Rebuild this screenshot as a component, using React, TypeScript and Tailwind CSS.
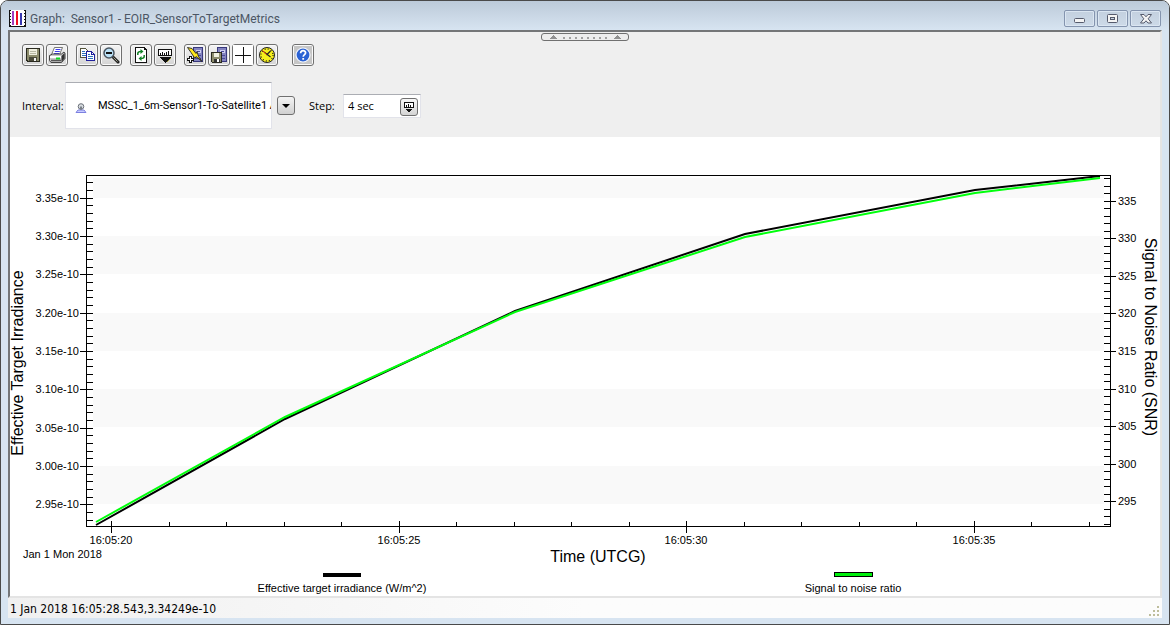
import type { ReactNode } from 'react'

const icon = 'h-[18px] w-[18px]'

function ToolButton({ label, children }: { label: string; children: ReactNode }) {
  return (
    <button
      type="button"
      aria-label={label}
      className="flex h-[22px] w-[22px] items-center justify-center rounded-[3px] border border-[#707070] bg-linear-to-b from-[#f4f4f4] to-[#d4d4d4] shadow-[inset_0_0_0_1px_#fafafa]"
    >
      {children}
    </button>
  )
}

const SaveIcon = () => (
  <svg viewBox="0 0 18 18" className={icon} shapeRendering="crispEdges">
    <path d="M2 2h14v14H3l-1-1z" fill="#2a2a20" />
    <path d="M3 3h12v12H4l-1-1z" fill="#8c8c6c" />
    <path d="M5 3h8v6H5z" fill="#f0f0e0" />
    <path d="M6 5.500h6M6 7.500h6" stroke="#b8b8a4" />
    <path d="M5 11h8v4H5z" fill="#4a4a3a" />
    <path d="M10 12h2v3h-2z" fill="#f4f4f4" />
  </svg>
)

const PrintIcon = () => (
  <svg viewBox="0 0 18 18" className={icon}>
    <path d="M6.500 1.500h8l-3 7h-8z" fill="#fff" stroke="#555" strokeWidth=".8" />
    <path d="M7.500 3.500h5M6.800 5.500h5M6 7.500h5" stroke="#3c3cf0" strokeWidth="1" />
    <path d="M1.500 9.500l3-1.500h9l2.500-2 1 1.500v5l-3.500 4h-10.500l-1.500-2z" fill="#c8c8c8" stroke="#444" />
    <path d="M2 10h11v2H2z" fill="#fff" />
    <path d="M13.500 10l3-3v5.500l-3 3.500z" fill="#333" />
    <path d="M3 14.500h10" stroke="#555" strokeWidth="1.500" />
    <path d="M8 12.500h4" stroke="#0cdb20" strokeWidth="2" />
  </svg>
)

const CopyIcon = () => (
  <svg viewBox="0 0 18 18" className={icon} shapeRendering="crispEdges">
    <path d="M2.500 2.500h5l3 3v6h-8z" fill="#fff" stroke="#55553c" />
    <path d="M4 5.500h3M4 7.500h4M4 9.500h4" stroke="#2b72ba" />
    <path d="M8.500 5.500h5l3 3v6h-8z" fill="#fff" stroke="#20209c" />
    <path d="M13.500 5.500v3h3" fill="none" stroke="#20209c" />
    <path d="M10 8.500h2M10 10.500h5M10 12.500h5" stroke="#2b72ba" />
  </svg>
)

const ZoomIcon = () => (
  <svg viewBox="0 0 18 18" className={icon}>
    <path d="M11 11l5 5" stroke="#222" strokeWidth="3" strokeLinecap="round" />
    <path d="M11.500 11.500l4 4" stroke="#a8a890" strokeWidth="1" />
    <circle cx="7" cy="7" r="5" fill="#b9e0f6" stroke="#4a5560" strokeWidth="1.500" />
    <path d="M4 7h6" stroke="#111" strokeWidth="2" />
  </svg>
)

const RefreshIcon = () => (
  <svg viewBox="0 0 18 18" className={icon} shapeRendering="crispEdges">
    <path d="M3.500 1.500h9l2 2v13h-11z" fill="#fff" stroke="#111" />
    <path d="M12.500 1.500v2h2" fill="none" stroke="#111" />
    <g fill="none" stroke="#118226" strokeWidth="1.500" shapeRendering="auto">
      <path d="M5.800 9V7.500q0-2 3.200-2" />
      <path d="M12.200 9v1.500q0 2-3.200 2" />
    </g>
    <path d="M8.500 3l3 2.500-3 2.500zM9.500 10l-3 2.500 3 2.500z" fill="#118226" shapeRendering="auto" />
  </svg>
)

const StepIcon = ({ className = icon }: { className?: string }) => (
  <svg viewBox="0 0 18 18" className={className} shapeRendering="crispEdges">
    <path d="M2.500 3.500h13v6h-13z" fill="#fff" stroke="#111" />
    <path d="M4.500 7v2M6.500 6v3M8.500 7v2M10.500 6v3M12.500 5v4" stroke="#111" />
    <path d="M4 11h11l-5.500 6z" fill="#111" />
    <path d="M11 16l4-4" stroke="#a8a040" />
  </svg>
)

const BookBack = () => (
  <>
    <path d="M7 1h10v15H7z" fill="#38387c" />
    <path d="M8 2h8v13H8z" fill="#8484c0" />
    <path d="M10 4h5v3h-5z" fill="#d0d0f0" />
    <path d="M11 5.500h3M10 9.500h5M10 12.500h5" stroke="#4a4a98" />
  </>
)

const QuickReportIcon = () => (
  <svg viewBox="0 0 18 18" className={icon}>
    <BookBack />
    <path d="M1.500 1.500l4.500 1 4 5 1-2 1.500 5 3.500 5-6-5-1 2-4-6z" fill="#ffe81c" stroke="#222" strokeWidth=".9" />
    <path d="M4.500 10v7M1 13.500h7" stroke="#111" strokeWidth="3" />
    <path d="M4.500 11v5M2 13.500h5" stroke="#fff" strokeWidth="1" />
  </svg>
)

const SaveReportIcon = () => (
  <svg viewBox="0 0 18 18" className={icon} shapeRendering="crispEdges">
    <BookBack />
    <path d="M1 6h11v11H2l-1-1z" fill="#2a2a20" />
    <path d="M2 7h9v9H2z" fill="#8c8c6c" />
    <path d="M4 7h5v4H4z" fill="#f0f0e0" />
    <path d="M4 13h6v3H4z" fill="#333" />
    <path d="M7 13h2v3H7z" fill="#fff" />
  </svg>
)

const CrossIcon = () => (
  <svg viewBox="0 0 20 20" className="h-5 w-5" shapeRendering="crispEdges">
    <path d="M0 0h20v20H0z" fill="#fff" />
    <path d="M10.500 2v16M2 10.500h16" stroke="#111" />
  </svg>
)

const ClockIcon = () => (
  <svg viewBox="0 0 18 18" className={icon}>
    <circle cx="9" cy="9" r="7.500" fill="#f6f01c" stroke="#222" />
    <circle cx="9" cy="9" r="6" fill="none" stroke="#222" strokeWidth="1.300" strokeDasharray="1 2.140" />
    <path d="M6 6l6.500 5M8.500 9l4-4" fill="none" stroke="#222" strokeWidth="1.200" />
    <path d="M4.500 4.500l4 4" stroke="#d92a12" strokeWidth="1" />
  </svg>
)

const HelpIcon = () => (
  <svg viewBox="0 0 20 20" className="h-5 w-5">
    <path d="M1 1h18v18H1z" fill="#c6c6c6" />
    <circle cx="10" cy="10" r="7" fill="#2b62d4" stroke="#f2f5fc" strokeWidth="1.200" />
    <path d="M7.600 8.200c0-3.400 5-3.200 5-.4 0 1.700-2.400 1.900-2.400 4" fill="none" stroke="#fff" strokeWidth="1.700" />
    <path d="M9.300 13h1.800v1.700H9.300z" fill="#fff" />
  </svg>
)

const toolGroups = [
  [
    { label: 'Save', glyph: <SaveIcon /> },
    { label: 'Print', glyph: <PrintIcon /> },
  ],
  [
    { label: 'Copy', glyph: <CopyIcon /> },
    { label: 'Zoom out', glyph: <ZoomIcon /> },
  ],
  [
    { label: 'Refresh', glyph: <RefreshIcon /> },
    { label: 'Set step', glyph: <StepIcon /> },
  ],
  [
    { label: 'Quick report', glyph: <QuickReportIcon /> },
    { label: 'Save as quick report', glyph: <SaveReportIcon /> },
    { label: 'Crosshair', glyph: <CrossIcon /> },
    { label: 'Animation time', glyph: <ClockIcon /> },
  ],
]

function TitleBar() {
  const caption =
    'flex h-[17px] w-[31px] items-center justify-center rounded-[2px] border border-[#8494ae] bg-linear-to-b from-[#c3d0df] to-[#cddae8] shadow-[inset_0_0_0_1px_#dbe6f2]'
  return (
    <header className="flex h-[29px] items-center justify-between bg-linear-to-b from-[#bccad9] to-[#d7e4f1] pt-[6px] pr-2 pl-2">
      <div className="flex items-center gap-1">
        <svg viewBox="0 0 17 17" className="h-[17px] w-[17px]" shapeRendering="crispEdges">
          <path d="M0 0h17v17H0z" fill="#fff" />
          <path d="M.5 0v17M16.500 0v17M0 16.500h17" stroke="#111" />
          <path d="M1.500 0v17M15.500 0v17" stroke="#111" strokeDasharray="1 2" />
          <path d="M3 1h2v14H3z" fill="#a03cc0" />
          <path d="M7 1h2v14H7z" fill="#f01020" />
          <path d="M11 3h2v12h-2z" fill="#3838b0" />
        </svg>
        <h1 className="font-['Roboto',sans-serif] text-[12px] whitespace-pre text-[#4c5664]">
          Graph:  Sensor1 - EOIR_SensorToTargetMetrics
        </h1>
      </div>
      <div className="flex gap-[2px]">
        <button type="button" aria-label="Minimize" className={caption}>
          <svg viewBox="0 0 12 10" className="h-[10px] w-3">
            <rect x=".5" y="4.500" width="10" height="4" rx="1" fill="#f4f4f4" stroke="#555a6c" />
          </svg>
        </button>
        <button type="button" aria-label="Maximize" className={caption}>
          <svg viewBox="0 0 12 10" className="h-[10px] w-3">
            <rect x=".5" y=".5" width="10" height="8" rx="1" fill="#f4f4f4" stroke="#555a6c" />
            <rect x="3.500" y="3.500" width="4" height="2" fill="#c8d4e2" stroke="#555a6c" />
          </svg>
        </button>
        <button type="button" aria-label="Close" className={caption}>
          <svg viewBox="0 0 12 10" className="h-[10px] w-3">
            <path
              d="M.5 .5h3.500L6 2.800 8 .5h3.500L8.200 4.800l3.300 4.200H8L6 6.800 4 9H.5l3.300-4.200z"
              fill="#f4f4f4"
              stroke="#555a6c"
            />
          </svg>
        </button>
      </div>
    </header>
  )
}

function Toolbar() {
  return (
    <div className="bg-[#efefef] pb-2">
      <div className="flex h-[10px] items-center justify-center">
        <button
          type="button"
          aria-label="Collapse toolbar"
          className="flex h-2 w-[88px] items-center justify-center rounded-[3px] border border-[#707070] bg-[#ededed]"
        >
          <svg viewBox="0 0 74 6" className="h-[6px] w-[74px]" shapeRendering="crispEdges">
            <path d="M1 5l4-4 4 4zM65 5l4-4 4 4z" fill="#909090" />
            <path d="M15 3.500h46" stroke="#a0a0a0" strokeWidth="2" strokeDasharray="2 4" />
          </svg>
        </button>
      </div>
      <div className="flex h-[26px] items-center gap-2 pl-3">
        {toolGroups.map((group, i) => (
          <div key={i} className="flex gap-[2px]">
            {group.map((tool) => (
              <ToolButton key={tool.label} label={tool.label}>
                {tool.glyph}
              </ToolButton>
            ))}
          </div>
        ))}
        <div className="pl-[6px]">
          <ToolButton label="Help">
            <HelpIcon />
          </ToolButton>
        </div>
      </div>
      <div className="flex items-center pt-[14px] pl-3 text-[11px]">
        <label htmlFor="interval" className="w-[43px] pt-[2px] whitespace-nowrap">
          Interval:
        </label>
        <div className="relative">
          <select
            id="interval"
            className="h-[47px] w-[207px] appearance-none border border-[#e2e3ea] border-t-[#abadb3] bg-white pt-[2px] pl-8 font-['Roboto',sans-serif]"
          >
            <option>MSSC_1_6m-Sensor1-To-Satellite1 A</option>
          </select>
          <svg viewBox="0 0 12 12" className="pointer-events-none absolute top-5 left-[10px] h-3 w-3">
            <path d="M1 10.500h10L9 8H3z" fill="#c8ccff" stroke="#7c80e0" />
            <circle cx="6" cy="4.500" r="2.800" fill="#d8dce0" stroke="#6a7078" />
            <path d="M5 4.500h2v3H5z" fill="#7a8088" />
          </svg>
        </div>
        <button
          type="button"
          aria-label="Choose interval"
          className="ml-[5px] flex h-[19px] w-[18px] items-center justify-center rounded-[3px] border border-[#707070] bg-linear-to-b from-[#f4f4f4] to-[#d0d0d0]"
        >
          <svg viewBox="0 0 8 4" className="h-1 w-2">
            <path d="M0 0h8L4 4z" fill="#000" />
          </svg>
        </button>
        <label htmlFor="step" className="ml-[14px] w-[34px] pt-[2px]">
          Step:
        </label>
        <div className="flex h-6 w-[78px] items-center border border-[#e2e3ea] border-t-[#abadb3] bg-white pt-[2px] pr-[2px]">
          <input id="step" defaultValue="4 sec" className="w-full min-w-0 bg-transparent pl-1 outline-none" />
          <button
            type="button"
            aria-label="Step options"
            className="flex h-[18px] w-[18px] shrink-0 items-center justify-center rounded-[3px] border border-[#707070] bg-linear-to-b from-[#f8f8f8] to-[#d4d4d4]"
          >
            <svg viewBox="0 0 14 14" className="h-[14px] w-[14px]" shapeRendering="crispEdges">
              <path d="M2.500 2.500h9v5h-9z" fill="#fff" stroke="#111" />
              <path d="M4.500 5v2M6.500 4v3M8.500 5v2" stroke="#111" />
              <path d="M4 9h6l-3 4z" fill="#111" />
            </svg>
          </button>
        </div>
      </div>
    </div>
  )
}

// Plot rectangle inside the 1150 x 459 drawing
const plot = { left: 76, right: 1100, top: 38, bottom: 389 }

const irradianceY = (v: number) => Math.round(60.8 + (335 - v) * 7.66)
const snrY = (v: number) => Math.round(63.9 + (335 - v) * 7.505)
const timeX = (s: number) => Math.round(101 + (s - 20) * 57.5)

const range = (from: number, to: number) => Array.from({ length: to - from + 1 }, (_, i) => from + i)

const irradiance = [[86, 388], [275, 282], [505, 174], [735, 97], [965, 53], [1090, 39]]
const snr = [[86, 385], [275, 280], [505, 175], [735, 100], [965, 56], [1090, 41]]

const toPoints = (pts: number[][]) => pts.map((p) => p.join(',')).join(' ')

function Chart() {
  return (
    <svg
      viewBox="0 0 1150 459"
      role="img"
      aria-label="Effective target irradiance and signal to noise ratio over time"
      className="block h-auto w-full bg-white font-['Liberation_Sans',Arial,sans-serif] text-[11px]"
    >
      <g fill="#f9f9f9" shapeRendering="crispEdges">
        <rect x="83" y="41" width="1011" height="20" />
        {[330, 320, 310, 300].map((v) => (
          <rect key={v} x="83" y={irradianceY(v)} width="1011" height="38" />
        ))}
      </g>

      <g stroke="#000" shapeRendering="crispEdges" fill="none">
        <rect x={plot.left + 0.5} y={plot.top + 0.5} width={plot.right - plot.left} height={plot.bottom - plot.top} />
        {range(293, 337).map((v) => (
          <path key={v} d={`M${v % 5 ? 77 : 70} ${irradianceY(v) + 0.5}H83`} />
        ))}
        {range(292, 338).map((v) => (
          <path key={v} d={`M1094 ${snrY(v) + 0.5}H${v % 5 ? 1100 : 1106}`} />
        ))}
        {range(20, 37).map((s) => (
          <path key={s} d={`M${timeX(s) + 0.5} ${s % 5 ? 385 : 384}V${s % 5 ? 389 : 396}`} />
        ))}
      </g>

      <polyline points={toPoints(irradiance)} fill="none" stroke="#000" strokeWidth="2" />
      <polyline points={toPoints(snr)} fill="none" stroke="#00ff0c" strokeWidth="2" />

      {range(59, 67).map((n) => (
        <text key={n} x="69" y={irradianceY(n * 5) + 4} textAnchor="end">
          {(n / 20).toFixed(2)}e-10
        </text>
      ))}
      {range(59, 67).map((n) => (
        <text key={n} x="1108" y={snrY(n * 5) + 4}>
          {n * 5}
        </text>
      ))}
      {[20, 25, 30, 35].map((s) => (
        <text key={s} x={timeX(s)} y="407" textAnchor="middle">
          16:05:{s}
        </text>
      ))}
      <text x="13" y="421">Jan 1 Mon 2018</text>

      <g className="text-[16px]" textAnchor="middle">
        <text x="588" y="425">Time (UTCG)</text>
        <text transform="translate(13 226) rotate(-90)">Effective Target Irradiance</text>
        <text transform="translate(1135 200) rotate(90)">Signal to Noise Ratio (SNR)</text>
      </g>

      <g shapeRendering="crispEdges">
        <rect x="313" y="436" width="38" height="4" />
        <rect x="824.5" y="435.5" width="38" height="4" fill="#00f00c" stroke="#000" />
      </g>
      <g textAnchor="middle">
        <text x="332" y="455">Effective target irradiance (W/m^2)</text>
        <text x="843" y="455">Signal to noise ratio</text>
      </g>
    </svg>
  )
}

export default function App() {
  return (
    <div className="flex min-h-screen flex-col overflow-hidden rounded-t-lg border border-[#4a4a4a] bg-[#d7e4f1] font-['Open_Sans',sans-serif] text-black">
      <TitleBar />
      <main className="mx-[7px] border-t-2 border-r-2 border-b-2 border-l-2 border-t-[#747678] border-r-[#e4e4e4] border-b-[#e4e4e4] border-l-[#747678]">
        <Toolbar />
        <Chart />
      </main>
      <footer className="mx-[7px] flex h-5 items-center justify-between bg-linear-to-r from-[#f0f0f0] to-[#fcfcfc] to-50% pt-[2px] pl-[2px] font-['DejaVu_Sans_Condensed','DejaVu_Sans',sans-serif] text-[12px]">
        <span>1 Jan 2018 16:05:28.543,3.34249e-10</span>
        <svg viewBox="0 0 12 12" className="mt-1 mr-[2px] h-3 w-3" shapeRendering="crispEdges">
          <path d="M9 1h2v2H9zM5 5h2v2H5zM9 5h2v2H9zM1 9h2v2H1zM5 9h2v2H5zM9 9h2v2H9z" fill="#bdbd9c" />
        </svg>
      </footer>
    </div>
  )
}
